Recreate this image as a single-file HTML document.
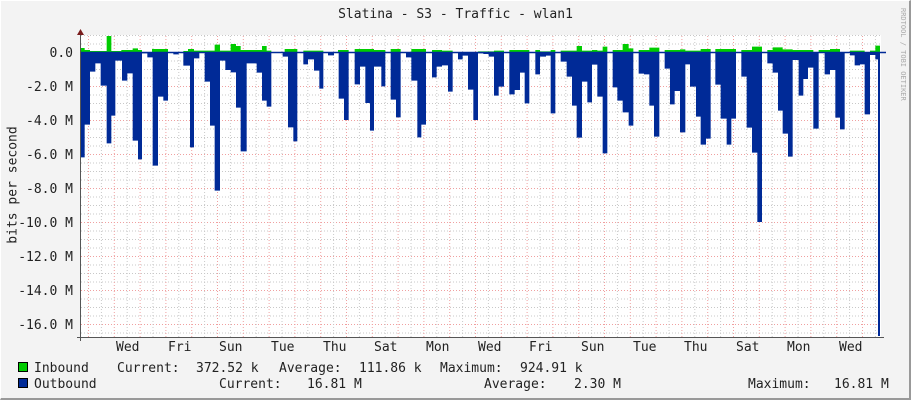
<!DOCTYPE html>
<html><head><meta charset="utf-8"><style>
body{margin:0;width:911px;height:400px;overflow:hidden;background:#f3f3f3;}
.t{position:absolute;font-family:"DejaVu Sans Mono","Liberation Mono",monospace;font-size:13px;color:#222;white-space:pre;line-height:13px;}
</style></head><body>
<div style="position:absolute;left:0;top:0;border-right:2px solid #999;border-bottom:2px solid #999;border-top:1px solid #fff;border-left:1px solid #fff;box-sizing:border-box;width:911px;height:400px"></div>
<svg width="911" height="400" style="position:absolute;left:0;top:0">
<defs>
<pattern id="gv" x="88" y="0" width="25.8" height="400" patternUnits="userSpaceOnUse">
<line x1="0.5" y1="0" x2="0.5" y2="400" stroke="#f0a0a0" stroke-dasharray="1,2"/>
<line x1="13.4" y1="0" x2="13.4" y2="400" stroke="#c8c8c8" stroke-dasharray="1,2"/>
</pattern>
<pattern id="gh" x="0" y="52" width="911" height="34" patternUnits="userSpaceOnUse">
<line x1="0" y1="0.5" x2="911" y2="0.5" stroke="#f0a0a0" stroke-dasharray="1,2"/>
<line x1="0" y1="9" x2="911" y2="9" stroke="#c8c8c8" stroke-dasharray="1,2"/>
<line x1="0" y1="17.5" x2="911" y2="17.5" stroke="#c8c8c8" stroke-dasharray="1,2"/>
<line x1="0" y1="26" x2="911" y2="26" stroke="#c8c8c8" stroke-dasharray="1,2"/>
</pattern>
</defs>
<rect x="80" y="35" width="801" height="302" fill="#fff"/>
<rect x="80" y="35" width="801" height="302" fill="url(#gh)"/>
<rect x="80" y="35" width="801" height="302" fill="url(#gv)"/>
<g transform="translate(78,30) scale(0.33333)">
<path fill="#00cc00" d="M8,67 V54 H20 V60 H36 V63 H86 V18 H100 V63 H130 V60 H164 V55 H180 V60 H192 V67 H222 V57 H270 V67 H316 V63 H330 V57 H348 V62 H410 V44 H426 V62 H458 V42 H474 V48 H488 V60 H552 V48 H566 V62 H580 V67 H620 V57 H658 V67 H676 V62 H736 V67 H780 V60 H812 V67 H830 V57 H888 V60 H922 V67 H938 V57 H968 V67 H1000 V57 H1044 V67 H1062 V60 H1092 V62 H1124 V67 Z"/>
<path fill="#002a97" d="M8,67 V382 H20 V284 H36 V125 H52 V100 H68 V167 H86 V340 H100 V257 H112 V92 H132 V152 H148 V130 H164 V332 H180 V388 H192 V70 H208 V82 H224 V407 H240 V200 H256 V212 H270 V67 H286 V73 H302 V67 H316 V107 H336 V352 H348 V85 H364 V67 H380 V155 H396 V287 H410 V482 H426 V92 H442 V120 H458 V127 H474 V233 H488 V364 H506 V100 H536 V128 H552 V212 H566 V230 H580 V67 H614 V80 H630 V292 H646 V334 H658 V67 H676 V103 H690 V88 H708 V122 H724 V176 H736 V67 H750 V76 H768 V67 H782 V206 H798 V270 H812 V67 H830 V163 H846 V110 H862 V219 H876 V302 H888 V110 H910 V169 H922 V67 H938 V209 H954 V262 H968 V67 H984 V82 H1000 V152 H1018 V322 H1030 V284 H1044 V67 H1062 V142 H1076 V110 H1092 V106 H1110 V185 H1124 V67 H1140 V88 H1154 V77 H1170 V179 H1186 V270 H1200 V67 Z"/>
</g>
<g transform="translate(478,30) scale(0.33333)">
<path fill="#00cc00" d="M0,67 V64 H48 V62 H78 V67 H94 V60 H154 V67 H172 V60 H186 V64 H218 V60 H232 V67 H248 V62 H296 V48 H312 V62 H342 V60 H358 V62 H374 V50 H388 V67 H404 V60 H434 V42 H452 V55 H466 V67 H482 V60 H514 V53 H544 V67 H560 V60 H606 V58 H622 V62 H668 V57 H698 V67 H712 V57 H774 V67 H790 V60 H822 V50 H852 V67 H868 V60 H884 V52 H914 V58 H944 V60 H1006 V67 H1022 V60 H1056 V57 H1086 V67 H1116 V62 H1160 V67 H1176 V62 H1192 V47 H1206 V67 Z"/>
<path fill="#002a97" d="M0,67 V70 H16 V72 H32 V80 H48 V197 H62 V170 H78 V67 H94 V193 H110 V180 H126 V128 H140 V220 H154 V67 H172 V133 H186 V80 H204 V77 H218 V250 H232 V67 H248 V95 H266 V140 H282 V227 H296 V323 H312 V155 H328 V217 H342 V104 H358 V200 H374 V370 H388 V67 H404 V172 H418 V212 H434 V247 H452 V287 H466 V67 H482 V131 H498 V133 H514 V227 H528 V320 H544 V67 H560 V116 H576 V223 H590 V183 H606 V307 H622 V103 H636 V170 H654 V260 H668 V344 H684 V326 H698 V67 H712 V164 H728 V266 H746 V344 H760 V266 H774 V67 H790 V140 H806 V293 H822 V368 H838 V576 H852 V67 H868 V100 H884 V128 H900 V242 H914 V311 H930 V380 H944 V90 H962 V197 H976 V147 H990 V113 H1006 V296 H1022 V67 H1040 V133 H1056 V120 H1072 V263 H1086 V298 H1100 V67 H1116 V76 H1130 V106 H1146 V103 H1160 V253 H1176 V75 H1192 V88 H1200 V918 H1206 V67 Z"/>
</g>
<line x1="80" y1="52.5" x2="886" y2="52.5" stroke="#002a97" stroke-width="1.5"/>
<line x1="80.5" y1="33" x2="80.5" y2="341" stroke="#555"/>
<line x1="77" y1="337.5" x2="884" y2="337.5" stroke="#555"/>
<polygon points="77,35 84,35 80.5,29" fill="#7a1d1d"/>
<text x="903" y="8" transform="rotate(90 903 8)" font-family="DejaVu Sans Mono,monospace" font-size="7" fill="#aaa" dominant-baseline="middle">RRDTOOL / TOBI OETIKER</text>
<text x="13" y="185" transform="rotate(-90 13 185)" font-family="DejaVu Sans Mono,monospace" font-size="13" fill="#222" text-anchor="middle" dominant-baseline="middle">bits per second</text>
<rect x="18.5" y="362.5" width="9" height="9" fill="#00cc00" stroke="#000"/>
<rect x="18.5" y="378.5" width="9" height="9" fill="#002a97" stroke="#000"/>
</svg>
<div class="t" style="left:0;width:911px;text-align:center;top:8px">Slatina - S3 - Traffic - wlan1</div>
<div class="t" style="left:0;width:73px;text-align:right;top:47px">0.0</div>
<div class="t" style="left:0;width:73px;text-align:right;top:81px">-2.0 M</div>
<div class="t" style="left:0;width:73px;text-align:right;top:115px">-4.0 M</div>
<div class="t" style="left:0;width:73px;text-align:right;top:149px">-6.0 M</div>
<div class="t" style="left:0;width:73px;text-align:right;top:183px">-8.0 M</div>
<div class="t" style="left:0;width:73px;text-align:right;top:217px">-10.0 M</div>
<div class="t" style="left:0;width:73px;text-align:right;top:251px">-12.0 M</div>
<div class="t" style="left:0;width:73px;text-align:right;top:285px">-14.0 M</div>
<div class="t" style="left:0;width:73px;text-align:right;top:319px">-16.0 M</div>
<div class="t" style="left:116px;top:341px">Wed</div>
<div class="t" style="left:168px;top:341px">Fri</div>
<div class="t" style="left:219px;top:341px">Sun</div>
<div class="t" style="left:271px;top:341px">Tue</div>
<div class="t" style="left:323px;top:341px">Thu</div>
<div class="t" style="left:374px;top:341px">Sat</div>
<div class="t" style="left:426px;top:341px">Mon</div>
<div class="t" style="left:478px;top:341px">Wed</div>
<div class="t" style="left:529px;top:341px">Fri</div>
<div class="t" style="left:581px;top:341px">Sun</div>
<div class="t" style="left:633px;top:341px">Tue</div>
<div class="t" style="left:684px;top:341px">Thu</div>
<div class="t" style="left:736px;top:341px">Sat</div>
<div class="t" style="left:787px;top:341px">Mon</div>
<div class="t" style="left:839px;top:341px">Wed</div>
<div class="t" style="left:34px;top:362px">Inbound</div>
<div class="t" style="left:117px;top:362px">Current:</div>
<div class="t" style="left:196px;top:362px">372.52 k</div>
<div class="t" style="left:279px;top:362px">Average:</div>
<div class="t" style="left:359px;top:362px">111.86 k</div>
<div class="t" style="left:440px;top:362px">Maximum:</div>
<div class="t" style="left:520px;top:362px">924.91 k</div>
<div class="t" style="left:34px;top:378px">Outbound</div>
<div class="t" style="left:219px;top:378px">Current:</div>
<div class="t" style="left:307px;top:378px">16.81 M</div>
<div class="t" style="left:484px;top:378px">Average:</div>
<div class="t" style="left:574px;top:378px">2.30 M</div>
<div class="t" style="left:748px;top:378px">Maximum:</div>
<div class="t" style="left:834px;top:378px">16.81 M</div>
</body></html>
